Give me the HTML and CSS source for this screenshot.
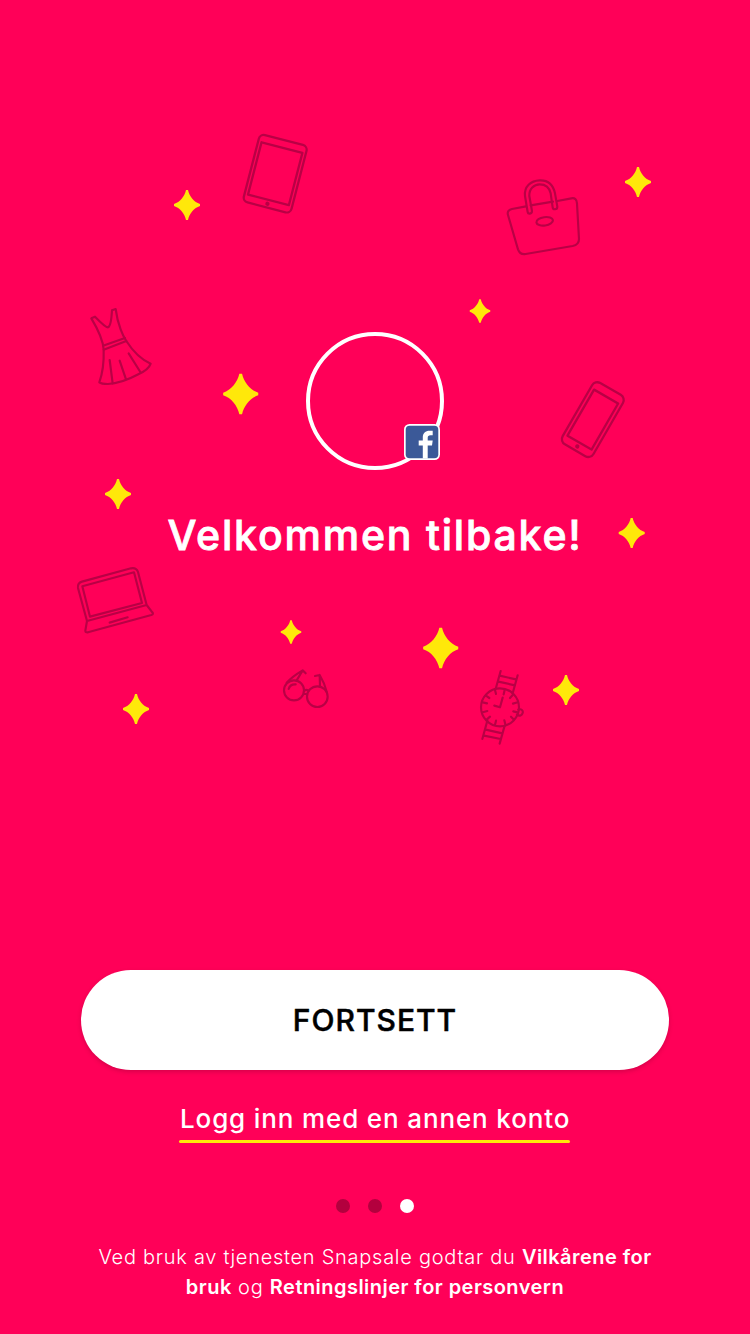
FILE: index.html
```html
<!DOCTYPE html>
<html lang="nb">
<head>
<meta charset="utf-8">
<title>Snapsale</title>
<link rel="stylesheet" href="styles.css">
</head>
<body>
<main class="screen">
  <svg class="confetti" viewBox="0 0 750 780" aria-hidden="true">
    <defs>
      <path id="star" d="M-1-15H1C2.500-8.500 7-3 13-1V1C7 3 2.500 8.500 1 15H-1C-2.500 8.500-7 3-13 1V-1C-7-3-2.500-8.500-1-15Z"/>
    </defs>
    <g class="stars">
      <use href="#star" transform="translate(187 205)"/>
      <use href="#star" transform="translate(638 182)"/>
      <use href="#star" transform="translate(480 311) scale(.79)"/>
      <use href="#star" transform="translate(240.700 394) scale(1.350)"/>
      <use href="#star" transform="translate(118 494)"/>
      <use href="#star" transform="translate(631.700 533)"/>
      <use href="#star" transform="translate(291 632) scale(.79)"/>
      <use href="#star" transform="translate(440.700 648) scale(1.350)"/>
      <use href="#star" transform="translate(566 690)"/>
      <use href="#star" transform="translate(136 709)"/>
    </g>
    <g class="items">
      <!-- tablet -->
      <g transform="translate(275.200 173.700) rotate(14.500)">
        <rect x="-24.600" y="-34.800" width="49.200" height="69.600" rx="5"/>
        <rect x="-21.100" y="-27" width="42.200" height="54"/>
        <circle class="solid" cx="0" cy="31" r="1"/>
      </g>
      <!-- phone -->
      <g transform="translate(592.800 419.600) rotate(30)">
        <rect x="-17.800" y="-35.400" width="35.600" height="70.800" rx="6"/>
        <rect x="-13.900" y="-26.600" width="27.800" height="53.200"/>
        <circle class="solid" cx="0" cy="31" r="1"/>
      </g>
      <!-- handbag -->
      <g class="fine" transform="translate(490 160) scale(.3333)">
        <path d="M108 139 66 147Q50 151 54 165L84 268Q90 285 107 282L248 258Q267 254 267 237L261 130Q260 112 244 115L202 123M122 136 189 125"/>
        <path d="M113 156 105 108C102 80 122 62 149 61S190 76 195 100L202 140C202 150 189 150 188 142L182 100C178 82 166 73 149 73S117 87 118 108L126 153C126 163 114 163 113 156Z"/>
        <ellipse cx="164" cy="184" rx="25" ry="12.500" transform="rotate(-8 164 184)"/>
      </g>
      <!-- dress -->
      <g class="fine" transform="translate(75 295) scale(.3333)">
        <path d="M49 70 60 65Q91 97 99 97C108 94 110 64 111 46L122 42C128 90 145 125 154 138C175 171 202 195 227 206Q221 224 190 238Q138 266 99 267Q79 267 73 262C85 228 87 197 86 164Q84 128 49 70Z"/>
        <path d="M84 152 150 129M86 164 154 138M104 195 113 265M134 197 153 253M161 175 196 231"/>
      </g>
      <!-- laptop -->
      <g class="fine" transform="translate(70 470) scale(.3333)">
        <path d="M51 453 24 354Q22 339 36 335L183 295Q199 292 204 306L230 405ZM51 453 46 482Q46 488 54 487L244 435Q252 432 247 427L230 405"/>
        <path d="M37 349 192 307 216 399 60 440ZM119 458 173 442"/>
      </g>
      <!-- sunglasses -->
      <g class="fine" transform="translate(270 610) scale(.3333)">
        <circle cx="72" cy="241" r="30"/>
        <circle cx="142" cy="260" r="31"/>
        <path d="M50 218C61 206 86 188 98 181L107 190M97 183 80 211M56 237Q60 222 77 223M135 198 149 195 150 229M149 195C158 210 166 229 170 245M103 242Q109 237 115 242M103 252H111"/>
      </g>
      <!-- wristwatch -->
      <g class="fine" transform="translate(460 660) scale(.3333)">
        <circle cx="120" cy="142" r="57"/>
        <path d="M122 33 107 87M173 46 158 100M119 47 168 58M115 65 165 76M82 182 67 237M134 197 119 251M77 209 127 220M72 227 122 237M128 113 120 142 103 137M175 149C184 145 190 152 188 159S179 170 171 164"/>
        <path d="M134 90 131 103M108 182 105 194M68 127 81 130M160 154 172 157M105 90 108 102M133 181 136 193M78 107 88 114M153 170 162 179M158 105 150 114M80 179 90 170M68 157 82 153M159 131 173 127"/>
      </g>
    </g>
  </svg>

  <header class="welcome">
    <div class="avatar">
      <svg class="facebook" viewBox="0 0 36 36" role="img" aria-label="Facebook">
        <rect width="36" height="36" rx="5.500" fill="#fff"/>
        <rect x="1.700" y="1.700" width="32.600" height="32.600" rx="4" fill="#3b5998"/>
        <path d="M18.800 34.500V21.600H14.700V16.500H18.800V13.500C18.800 9 21.500 6.700 25.500 6.700H28.700V11.300H26.500C24.500 11.300 23.700 12.200 23.700 14V16.500H28.700L28 21.600H23.700V34.500Z" fill="#fff"/>
      </svg>
    </div>
    <h1 class="title">Velkommen tilbake!</h1>
  </header>

  <section class="actions">
    <button class="continue" type="button">FORTSETT</button>
    <a class="other">Logg inn med en annen konto</a>
    <div class="pager"><i class="dot"></i><i class="dot"></i><i class="dot active"></i></div>
    <p class="terms">Ved bruk av tjenesten Snapsale godtar du <b>Vilkårene for</b><br><b>bruk</b> og <b>Retningslinjer for personvern</b></p>
  </section>
</main>
</body>
</html>
```
FILE: styles.css
```css
* { box-sizing: border-box; }
body { margin: 0; background: #ff0058; }
.screen {
  position: relative;
  display: flex;
  flex-direction: column;
  justify-content: space-between;
  width: 750px;
  height: 1334px;
  overflow: hidden;
  background: #ff0058;
  color: #fff;
  font-family: Inter, "Liberation Sans", sans-serif;
}
.confetti { position: absolute; top: 0; left: 0; width: 750px; height: 780px; }
.stars { fill: #ffe80a; }
.items { fill: none; stroke: #b90045; stroke-width: 2.300; stroke-linecap: round; stroke-linejoin: round; }
.fine { stroke-width: 6.500; }
.solid { fill: #b90045; }
.welcome {
  position: relative;
  display: flex;
  flex-direction: column;
  align-items: center;
  padding-top: 332px;
}
.avatar { position: relative; width: 138px; height: 138px; border: 4px solid #fff; border-radius: 50%; }
.facebook { position: absolute; right: 0; bottom: 6px; width: 36px; height: 36px; }
.title {
  margin: 40px 0 0;
  font-size: 41px;
  line-height: 50px;
  font-weight: 500;
  letter-spacing: 1.800px;
  white-space: nowrap;
  -webkit-text-stroke: .8px #fff;
}
.actions {
  display: flex;
  flex-direction: column;
  align-items: center;
  padding-bottom: 32px;
}
.continue {
  width: 588px;
  height: 100px;
  padding: 0;
  border: 0;
  border-radius: 50px;
  background: #fff;
  box-shadow: 0 2px 4px rgba(100, 0, 35, .25);
  color: #000;
  font: 500 30px/36px Inter, "Liberation Sans", sans-serif;
  letter-spacing: 1px;
  -webkit-text-stroke: .5px #000;
}
.other {
  position: relative;
  width: 391px;
  height: 43px;
  margin: 30px 1px 0 0;
  padding: 3px 0 0 1px;
  font-size: 26px;
  line-height: 32px;
  font-weight: 500;
  letter-spacing: .860px;
  white-space: nowrap;
}
.other::after { content: ""; position: absolute; left: 0; right: 0; bottom: 0; height: 3px; border-radius: 2px; background: #ffe80a; }
.pager { display: flex; gap: 18px; margin-top: 56px; }
.dot { width: 14px; height: 14px; border-radius: 50%; background: #b3003e; }
.dot.active { background: #fff; }
.terms { margin: 29px 0 0; font-size: 20px; line-height: 30px; font-weight: 300; text-align: center; letter-spacing: .730px; white-space: nowrap; }
.terms b { font-weight: 600; letter-spacing: .460px; }
```
